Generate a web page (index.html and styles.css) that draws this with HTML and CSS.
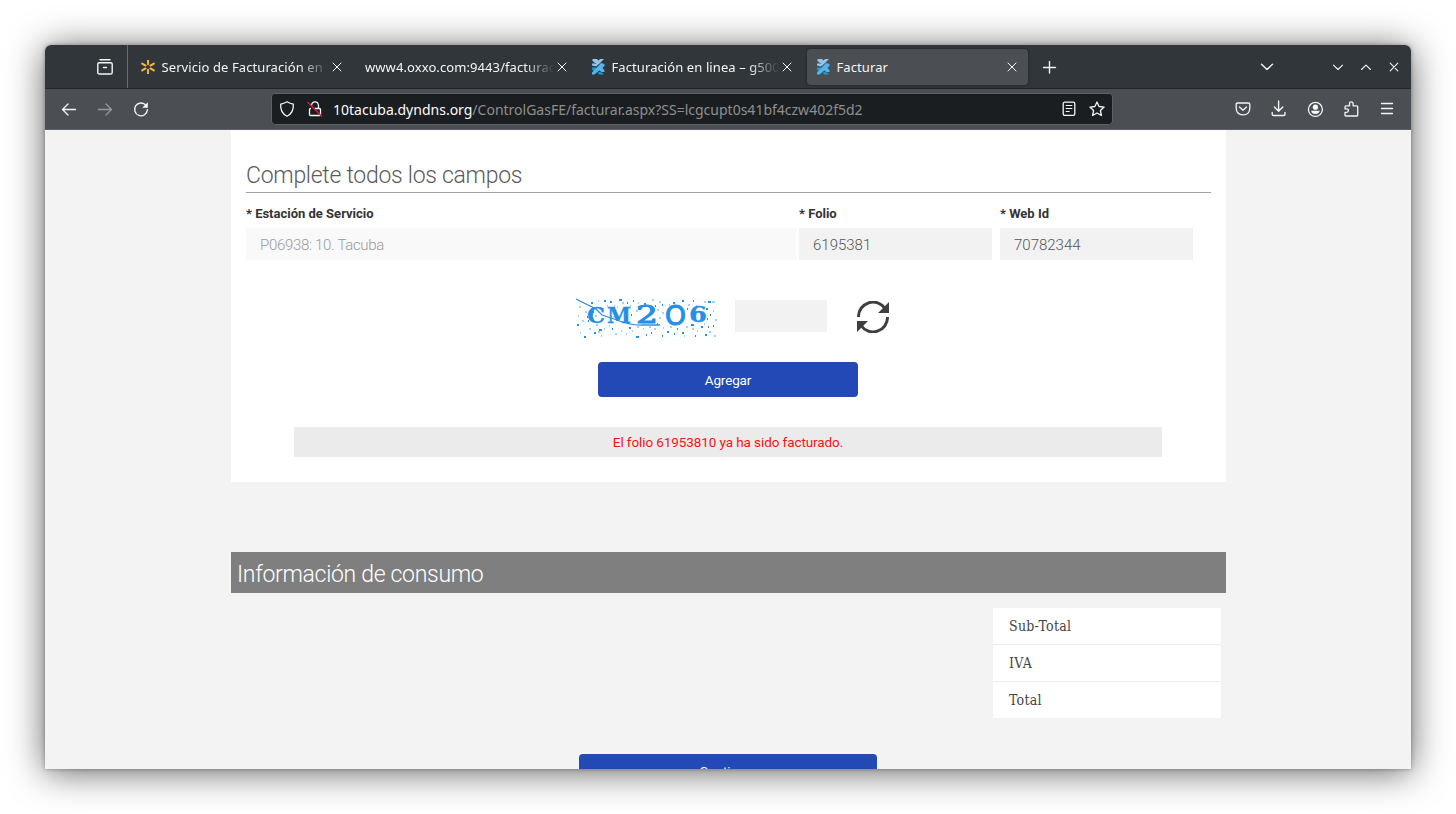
FILE: index.html
```
<!DOCTYPE html>
<html lang="es">
<head>
<meta charset="utf-8">
<title>Facturar</title>
<link rel="stylesheet" href="styles.css">
</head>
<body>
<svg class="defs" width="0" height="0">
  <symbol id="close" viewBox="0 0 16 16"><path d="M4 4l8 8M12 4l-8 8"/></symbol>
  <symbol id="station" viewBox="0 0 16 18">
    <path class="f-light" d="M2.500 1H7l2 2-2.500 2H5L2.500 3zM10 1h4L9.500 5.500 6 8.500 2 7.500V5.500h4z"/>
    <path class="f-deep" d="M2 9.500h3.500L8 12l-2.500 2L2 11.500zM9 14l3 .5 2 2H9.500L7.500 15z"/>
    <path class="f-mid" d="M11 5l3.500 1v2L4.500 16.500H2v-2zM9 10l3-1 2.500 3.500v1.500h-3L8.500 12z"/>
  </symbol>
</svg>
<div class="window">
  <header class="tabbar">
    <div class="view"><svg class="ic" viewBox="0 0 16 16"><path d="M3 .8h10M2.200 3.700h11.600q1.400 0 1.400 1.400v8.300q0 1.600-1.600 1.600H2.400Q.8 15 .8 13.400V5.100q0-1.400 1.400-1.400zM6.500 8.500h3" stroke-width="1.400"/></svg></div>
    <div class="tabs">
      <div class="tab"><svg class="fav" viewBox="0 0 14 14"><path class="spark" d="M7 .3v4M7 9.700v4M1.200 3.600l3.400 2M9.400 8.400l3.400 2M12.800 3.600l-3.400 2M4.600 8.400l-3.400 2"/></svg><span class="label fade">Servicio de Facturación en</span><svg class="ic x"><use href="#close"/></svg></div>
      <div class="tab"><span class="label fade">www4.oxxo.com:9443/facturac</span><svg class="ic x"><use href="#close"/></svg></div>
      <div class="tab"><svg class="fav logo"><use href="#station"/></svg><span class="label fade">Facturación en linea – g500</span><svg class="ic x"><use href="#close"/></svg></div>
      <div class="tab active"><svg class="fav logo"><use href="#station"/></svg><span class="label">Facturar</span><svg class="ic x"><use href="#close"/></svg></div>
    </div>
    <svg class="ic plus" viewBox="0 0 16 16"><path d="M8.500 2.500v11.500M2.500 8.500h12" stroke-width="1.400"/></svg>
    <svg class="ic all" viewBox="0 0 16 16"><path d="M2.500 5.200L8 10.500l5.500-5.300" stroke-width="1.400"/></svg>
    <div class="controls">
      <svg class="ic" viewBox="0 0 16 16"><path d="M3.500 6.200L8 10.500l4.500-4.300"/></svg>
      <svg class="ic" viewBox="0 0 16 16"><path d="M3.500 10.500L8 6.200l4.500 4.300"/></svg>
      <svg class="ic" viewBox="0 0 16 16"><path d="M4.200 4.200l7.600 7.600M11.800 4.200l-7.600 7.600"/></svg>
    </div>
  </header>
  <nav class="toolbar">
    <div class="group">
      <svg class="ic" viewBox="0 0 16 16"><path d="M14.500 8.500h-13M7 3L1.500 8.500 7 14" stroke-width="1.300"/></svg>
      <svg class="ic dim" viewBox="0 0 16 16"><path d="M1.500 8.500h13M9 3l5.500 5.500L9 14" stroke-width="1.300"/></svg>
      <svg class="ic" viewBox="0 0 16 16"><path d="M13 4.400A6.400 6.400 0 1 0 14.400 8.800" stroke-width="1.400"/><path class="solid" d="M14.800 1.200v5.600H9.200z"/></svg>
    </div>
    <div class="url">
      <svg class="ic" viewBox="0 0 16 16"><path d="M8 .8Q11 2.600 14.300 3.200 15 11.500 8 15.200 1 11.500 1.700 3.200 5 2.600 8 .8z" stroke-width="1.300"/></svg>
      <svg class="ic" viewBox="0 0 16 16"><path d="M4.500 4.500Q4.800.8 8 .8T11.500 4.500V7M8 7.500h4.500q1 0 1 1v5q0 1-1 1H3.500q-1 0-1-1v-5q0-1 1-1" stroke-width="1.300"/><path class="strike" d="M1 1.500L14.500 15"/></svg>
      <span class="address"><b>10tacuba.dyndns.org</b>/ControlGasFE/facturar.aspx?SS=lcgcupt0s41bf4czw402f5d2</span>
      <svg class="ic" viewBox="0 0 16 16"><rect x="2.200" y="1.200" width="11.600" height="13.200" rx="1.600" stroke-width="1.300"/><path d="M5.200 4.500h5.600M5.200 7.500h5.600M5.200 10.500h3" stroke-width="1.200"/></svg>
      <svg class="ic" viewBox="0 0 16 16"><path d="M8 1l2.100 4.500 5 .6-3.700 3.400 1 5L8 12l-4.400 2.500 1-5L.9 6.100l5-.6z" stroke-width="1.300"/></svg>
    </div>
    <div class="group right">
      <svg class="ic" viewBox="0 0 16 16"><path d="M2.500 2h11q1.300 0 1.300 1.300V7q0 6.800-6.800 6.800T1.200 7V3.300Q1.200 2 2.500 2zM4.500 6L8 9.300 11.500 6" stroke-width="1.300"/></svg>
      <svg class="ic" viewBox="0 0 16 16"><path d="M7.600 0v10M3.400 6l4.200 4.200L11.800 6M1.200 11.500v1.700q0 1.300 1.300 1.300h10.200q1.300 0 1.300-1.300v-1.700" stroke-width="1.400"/></svg>
      <svg class="ic" viewBox="0 0 16 16"><circle cx="8.400" cy="8.400" r="7" stroke-width="1.300"/><circle class="solid" cx="8.400" cy="6.200" r="2.600"/><path class="solid" d="M4.100 9.700h8.600Q11.900 13 8.400 13T4.100 9.700z"/></svg>
      <svg class="ic" viewBox="0 0 16 16"><path d="M2 6.500q0-1.700 1-1.700h3.500V2.800Q6.500.8 8.300.8t1.800 2v2h3.600q1 0 1 1v8.400q0 .8-.8.800H2.800q-.8 0-.8-.8v-2.900h1.700q1.700 0 1.700-1.700T3.700 7.900H2z" stroke-width="1.300"/></svg>
      <svg class="ic" viewBox="0 0 16 16"><path d="M2.500 2.500h11M2.500 7.500h11M2.500 12.500h11" stroke-width="1.300"/></svg>
    </div>
  </nav>
  <main class="page">
    <section class="card">
      <h2><span>Complete todos los campos</span></h2>
      <div class="fields">
        <label class="f1"><span class="name">* Estación de Servicio</span><span class="input off"><span>P06938: 10. Tacuba</span></span></label>
        <label class="f2"><span class="name">* Folio</span><span class="input"><span>6195381</span></span></label>
        <label class="f2"><span class="name">* Web Id</span><span class="input"><span>70782344</span></span></label>
      </div>
      <div class="check">
        <svg class="captcha" viewBox="0 0 141 40">
          <rect class="paper" width="141" height="40"/>
          <path class="dots pale" d="M3 9h2M2 18h1M4 35h1M9 14h2M13 31h2M19 18h2M22 3h1M20 27h2M25 38h1M31 8h1M38 8h1M46 5h2M41 9h1M54 8h1M62 5h1M76 2h2M83 4h2M81 12h2M93 7h1M102 8h1M112 7h2M120 8h2M128 4h2M136 4h3M137 13h1M139 22h2M126 18h2M133 34h2M138 38h2M121 33h1M116 31h2M110 29h2M108 38h1M103 24h2M94 29h2M87 30h1M83 20h2M78 31h2M73 29h2M67 31h1M61 29h2M56 33h1M50 36h1M45 33h1M39 36h2M33 28h1M28 31h1M22 34h2M6 23h2M37 19h2M60 13h2M86 15h2M115 21h1M128 26h1"/>
          <path class="dots" d="M1 27h2M8 39h2M12 23h1M16 10h1M15 5h2M23 10h2M18 35h2M28 3h2M34 4h2M43 2h3M51 5h1M57 3h1M68 6h2M79 8h1M86 7h1M97 5h2M106 3h2M117 3h1M132 4h3M130 11h2M134 17h1M131 21h1M137 28h1M129 37h2M125 29h2M115 27h3M119 38h1M106 35h2M101 31h1M98 36h1M91 34h2M86 38h1M81 26h1M75 35h1M70 37h1M60 39h3M53 30h2M36 31h1M23 32h3M11 19h1M17 14h1M55 17h1M111 11h1M132 29h1"/>
          <path class="wire" d="M0 1L20 11 26 17 38 21Q56 28 67 27L84 27"/>
          <g class="code"><text x="11" y="25" textLength="18" lengthAdjust="spacingAndGlyphs">C</text><text x="31" y="25" textLength="24" lengthAdjust="spacingAndGlyphs">M</text><text class="tall" x="60" y="24.500" textLength="22" lengthAdjust="spacingAndGlyphs">2</text><text class="ring" x="89" y="27" textLength="21" lengthAdjust="spacingAndGlyphs">O</text><text x="113" y="24" textLength="18" lengthAdjust="spacingAndGlyphs">6</text></g>
        </svg>
        <span class="answer"></span>
        <svg class="refresh" viewBox="0 0 32 32"><path class="arc" d="M1.500 16A14.500 14.500 0 0 1 28 7.500M30.500 16A14.500 14.500 0 0 1 4 24.500"/><path class="head" d="M32 1v11H21zM0 31V20h11z"/></svg>
      </div>
      <div class="button add"><span>Agregar</span></div>
      <div class="error"><span>El folio 61953810 ya ha sido facturado.</span></div>
    </section>
    <h2 class="bar"><span>Información de consumo</span></h2>
    <div class="totals"><div>Sub-Total</div><div>IVA</div><div>Total</div></div>
    <div class="button next"><span>Continuar</span></div>
  </main>
</div>
</body>
</html>
```
FILE: styles.css
```
* { box-sizing: border-box; }
body { margin: 0; height: 814px; padding: 45px; overflow: hidden; background: #fff; font-family: "Noto Sans", sans-serif; }
.defs { display: block; position: absolute; }
.window { width: 1366px; height: 724px; overflow: hidden; border-radius: 6px 6px 0 0; background: #f3f3f3; box-shadow: 0 0 4px rgba(0,0,0,.32), 0 3px 36px rgba(0,0,0,.62); }
svg { display: block; flex: none; }
.ic { width: 16px; height: 16px; overflow: visible; fill: none; stroke: #f4f5f5; stroke-width: 1.1; stroke-linecap: round; stroke-linejoin: round; }
.solid { fill: #fbfbfb; stroke: none; }
.dim { opacity: .45; }

.tabbar { display: flex; align-items: center; height: 44px; background: #31363a; border-bottom: 1px solid #202427; color: #f5f5f5; }
.view { width: 83px; height: 43px; padding: 14px 0 0 52px; border-right: 1px solid #676b6e; }
.tabs { display: flex; gap: 4px; padding-left: 4px; }
.tab { display: flex; align-items: center; width: 221px; height: 36px; padding: 0 8px; border-radius: 4px; font-size: 13px; }
.active { background: #4b4e53; box-shadow: 0 0 3px rgba(0,0,0,.45); }
.label { flex: 1; overflow: hidden; white-space: nowrap; line-height: 20px; letter-spacing: .09px; }
.fade { -webkit-mask-image: linear-gradient(90deg, #000 calc(100% - 30px), transparent); mask-image: linear-gradient(90deg, #000 calc(100% - 30px), transparent); }
.fav { width: 14px; height: 14px; margin: 0 6.5px 0 1px; }
.logo { width: 16px; height: 18px; margin: 0 5.5px 0 0; }
.x { stroke-width: 1; }
.spark { stroke: #f8bd35; stroke-width: 1.9; stroke-linecap: round; fill: none; }
.f-light { fill: #91c5ea; }
.f-mid { fill: #55b5eb; }
.f-deep { fill: #159cda; }
.plus { margin-left: 13px; }
.all { margin-left: auto; margin-right: 55px; }
.controls { display: flex; gap: 12px; padding-right: 9px; }

.toolbar { display: flex; align-items: center; height: 41px; background: #4b4e53; border-bottom: 1px solid #5d6064; padding: 0 16px; }
.group { display: flex; gap: 20px; }
.right { margin-left: auto; }
.url { display: flex; align-items: center; width: 842px; height: 32px; margin-left: 122px; padding: 0 7px; gap: 12px; background: #1b1e20; border: 1px solid #5c6063; border-radius: 4px; }
.address { flex: 1; margin-left: -2px; padding-top: 2px; white-space: nowrap; font-size: 14px; line-height: 22px; color: #8d8f90; }
.address b { font-weight: 400; color: #fbfbfb; }
.strike { stroke: #e2194b; stroke-width: 1.4; }

.page { width: 995px; margin-left: 186px; color: #333; font-family: Roboto, sans-serif; }
.card { height: 352px; padding: 28px 15px 0; background: #fff; }
h2 { margin: 0; font-size: 23px; font-weight: 300; line-height: 36px; letter-spacing: -.28px; color: #5c5c5c; }
.card h2 { height: 35px; border-bottom: 1px solid #a3a3a3; }
.fields { display: flex; padding-top: 11px; }
.f1 { width: 550px; margin-right: 3px; }
.f2 { width: 193px; margin-right: 8px; }
.name { display: block; height: 24px; font-size: 13px; line-height: 20px; font-weight: 700; white-space: nowrap; }
.input { display: block; height: 32px; padding-left: 14px; background: #f2f2f2; color: #555; font-size: 15px; font-weight: 300; line-height: 34px; }
.off { background: #f9f9f9; color: #999; letter-spacing: -.32px; }
.check { display: flex; align-items: center; height: 40px; margin: 38px 0 0 330px; }
.captcha { width: 141px; height: 40px; }
.paper { fill: #fcfefe; }
.dots { stroke: #2f8edb; stroke-width: 1.8; fill: none; }
.pale { stroke: #8cc4ee; stroke-width: 1.5; }
.wire { stroke: #3690dd; stroke-width: 1.3; fill: none; }
.code { font: 700 22px "DejaVu Serif", serif; fill: #248fe6; stroke: #248fe6; stroke-width: .3; }
.tall { font-size: 25px; font-weight: 400; stroke-width: 1; }
.ring { font-family: "DejaVu Sans", sans-serif; font-size: 26px; font-weight: 400; stroke-width: 1; }
.answer { width: 92px; height: 32px; margin: -4px 30px 0 18px; background: #f2f2f2; }
.refresh { width: 32px; height: 32px; margin-top: -2px; }
.arc { fill: none; stroke: #3f3f3f; stroke-width: 3; }
.head { fill: #3f3f3f; }
.button { border-radius: 4px; background: #2249b6; color: #fff; text-align: center; font-size: 13.5px; line-height: 37px; letter-spacing: -.15px; }
.add { width: 260px; height: 35px; margin: 24px 0 0 352px; }
.error { width: 868px; height: 30px; margin: 30px auto 0 48px; background: #ebebeb; color: #fb1111; text-align: center; font-size: 13.5px; line-height: 31px; letter-spacing: -.09px; }
.bar { height: 41px; margin-top: 70px; padding-left: 6px; background: #7f7f7f; color: #fff; line-height: 45px; letter-spacing: -.31px; }
.totals { display: grid; gap: 1px; width: 228px; margin: 15px 5px 0 auto; background: #ededed; font-family: "DejaVu Serif Condensed", "DejaVu Serif", serif; font-size: 14px; letter-spacing: .25px; color: #444; }
.totals div { height: 36px; padding-left: 16px; line-height: 36px; background: #fff; }
.next { width: 298px; height: 36px; margin: 36px 0 0 348px; line-height: 34px; }
```
